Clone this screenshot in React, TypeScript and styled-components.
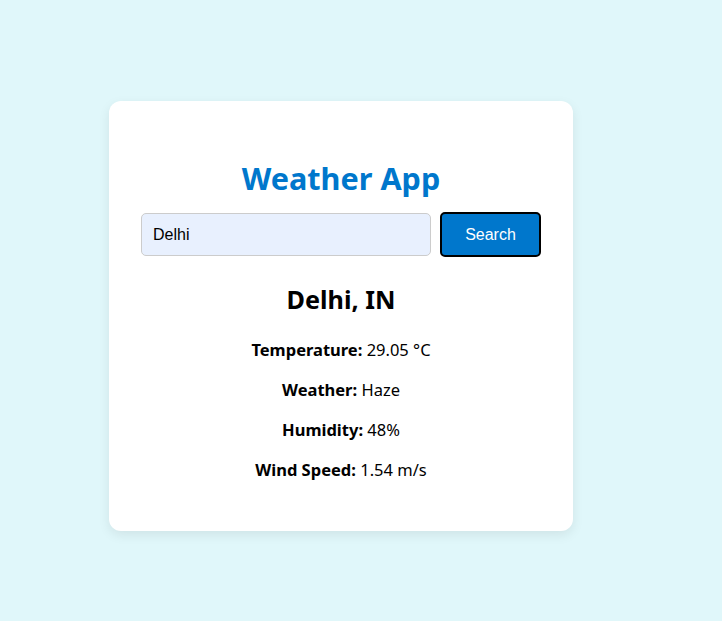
import React from "react";
import styled, { createGlobalStyle } from "styled-components";

const Global = createGlobalStyle`
  html, body { margin: 0; padding: 0; }
  body {
    background: #e0f7fa;
    font-family: "Noto Sans", "Open Sans", sans-serif;
    color: #000;
  }
`;

const Page = styled.div`
  min-height: 621px;
  box-sizing: border-box;
  padding: 101px 0 0 109px;
  display: flex;
  align-items: flex-start;
`;

const Card = styled.div`
  width: 464px;
  box-sizing: border-box;
  background: #fff;
  border-radius: 12px;
  box-shadow: 0 4px 12px rgba(0, 0, 0, 0.08);
  padding: 57px 32px 49px;
  display: flex;
  flex-direction: column;
  align-items: center;
`;

const Title = styled.h1`
  margin: 0;
  font-size: 30.6px;
  line-height: 40px;
  font-weight: 700;
  color: #0077cc;
`;

const SearchRow = styled.div`
  margin-top: 14px;
  width: 100%;
  display: flex;
  align-items: center;
  gap: 9px;
  height: 45px;
`;

const Input = styled.input`
  flex: 1;
  height: 43px;
  box-sizing: border-box;
  border: 1px solid #ccc;
  border-radius: 5px;
  background: #e8f0fe;
  padding: 0 11px;
  font-family: "Liberation Sans", Arial, sans-serif;
  font-size: 16px;
  color: #000;
  outline: none;
`;

const Button = styled.button`
  width: 101px;
  height: 45px;
  box-sizing: border-box;
  border: 2px solid #000;
  border-radius: 5px;
  background: #0077cc;
  color: #fff;
  font-family: "Liberation Sans", Arial, sans-serif;
  font-size: 16px;
  cursor: pointer;
`;

const City = styled.h2`
  margin: 26px 0 0;
  font-size: 25.2px;
  line-height: 32px;
  font-weight: 700;
`;

const Info = styled.p`
  margin: 0;
  font-size: 16.5px;
  line-height: 24px;
  & + & { margin-top: 16px; }
  &:first-of-type { margin-top: 23px; }
  strong { font-weight: 700; }
`;

export default function App() {
  return (
    <>
      <Global />
      <Page>
        <Card>
          <Title>Weather App</Title>
          <SearchRow>
            <Input defaultValue="Delhi" />
            <Button>Search</Button>
          </SearchRow>
          <City>Delhi, IN</City>
          <Info><strong>Temperature:</strong> 29.05 °C</Info>
          <Info><strong>Weather:</strong> Haze</Info>
          <Info><strong>Humidity:</strong> 48%</Info>
          <Info><strong>Wind Speed:</strong> 1.54 m/s</Info>
        </Card>
      </Page>
    </>
  );
}
